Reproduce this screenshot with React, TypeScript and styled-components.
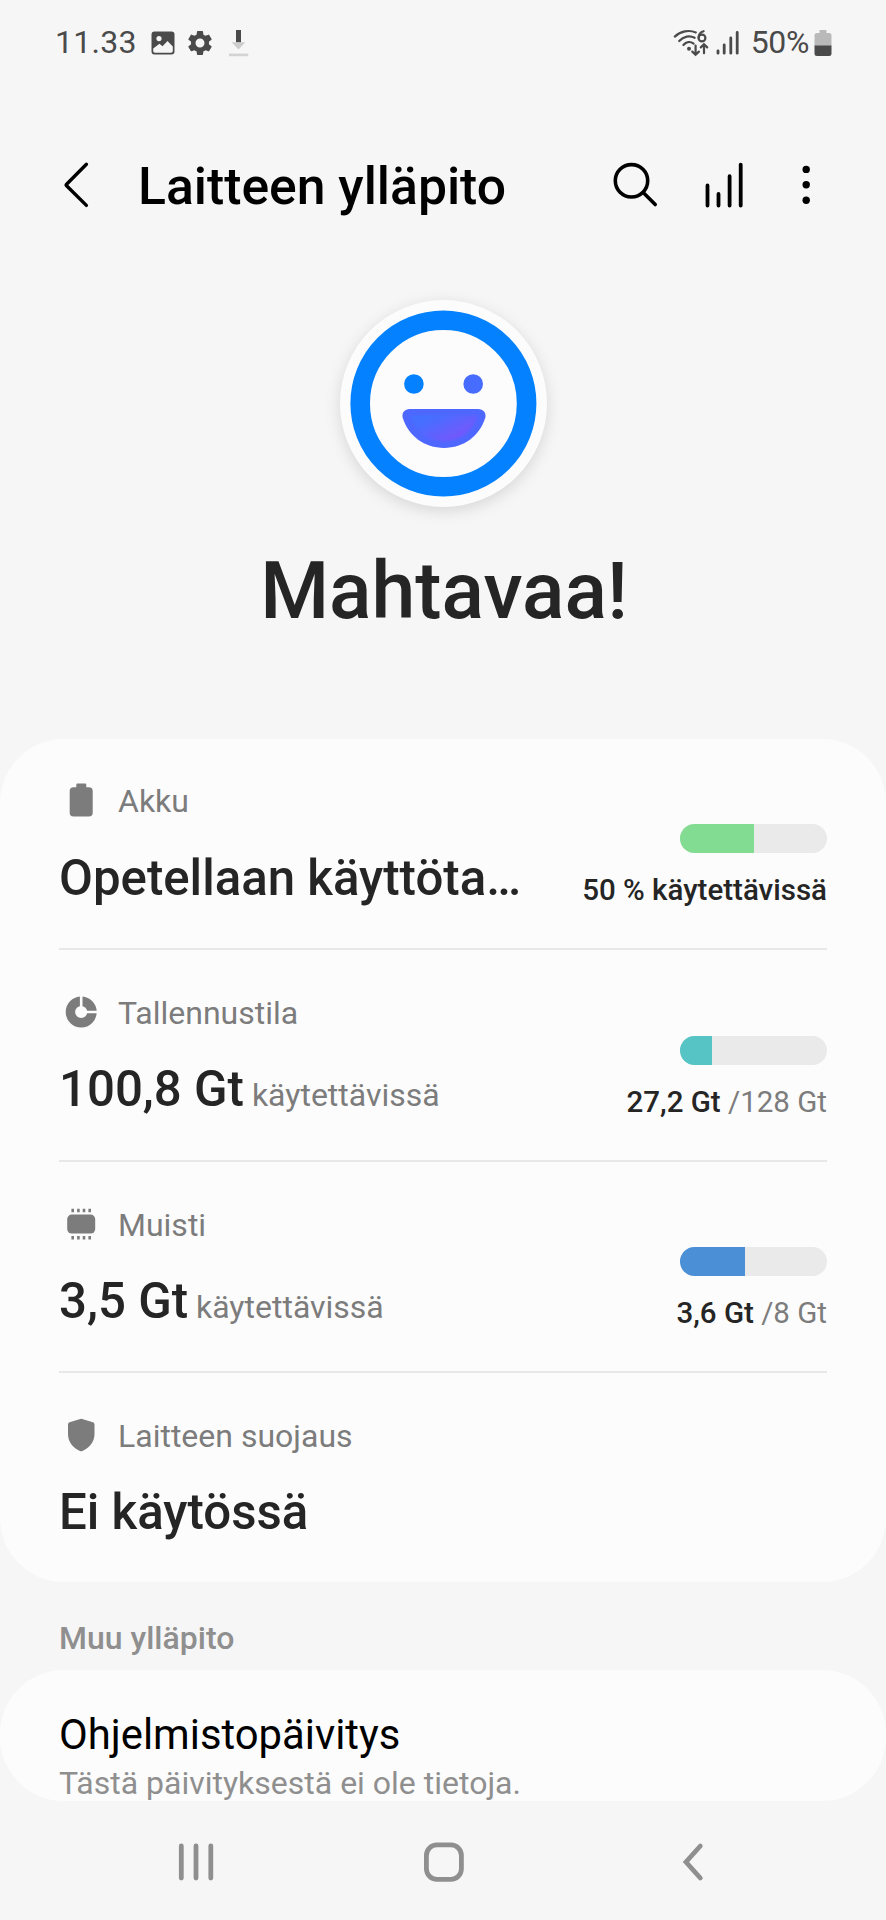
import React from 'react';
import styled, { createGlobalStyle } from 'styled-components';

const GlobalStyle = createGlobalStyle`
  * { box-sizing: border-box; }
  body {
    margin: 0;
    background: #f6f6f6;
    font-family: Roboto, 'Liberation Sans', sans-serif;
    color: #252525;
  }
  svg { display: block; flex: none; }
`;

const Screen = styled.div`
  width: 886px;
  height: 1920px;
  display: flex;
  flex-direction: column;
  overflow: hidden;
  background: #f6f6f6;
`;

const StatusBar = styled.header`
  height: 86px;
  padding: 0 54px 0 55px;
  display: flex;
  justify-content: space-between;
  color: #4a4a4a;
`;

const StatusGroup = styled.div`
  height: 86px;
  display: flex;
  align-items: center;
`;

const StatusText = styled.span<{ $gap: number }>`
  padding-bottom: 2px;
  font-size: 32px;
  line-height: 38px;
  margin-right: ${(p) => p.$gap}px;
  letter-spacing: ${(p) => (p.$gap > 10 ? '0.3px' : '-0.4px')};
`;

const StatusIcons = styled.div<{ $gap: number }>`
  display: flex;
  align-items: center;
  gap: ${(p) => p.$gap}px;
  margin-right: 12px;
`;

const Toolbar = styled.div`
  height: 197px;
  padding: 0 64px 0 60px;
  display: flex;
  align-items: center;
`;

const Title = styled.h1`
  flex: 1;
  margin: 5px 0 0 44px;
  font-size: 51.7px;
  line-height: 60px;
  font-weight: 500;
  color: #000;
`;

const Actions = styled.div`
  display: flex;
  align-items: center;
  gap: 40px;
`;

const Hero = styled.section`
  height: 455.7px;
  padding-top: 17px;
  display: flex;
  flex-direction: column;
  align-items: center;
`;

const FaceDisc = styled.div`
  width: 207px;
  height: 207px;
  border-radius: 50%;
  background: #fcfcfc;
  box-shadow: 0 4px 16px rgba(0, 0, 0, 0.13);
`;

const Verdict = styled.h2`
  margin: 38px 0 0;
  padding-left: 2px;
  font-size: 78.8px;
  line-height: 92px;
  font-weight: 500;
`;

const Card = styled.section`
  flex: none;
  padding: 0 59px;
  border-radius: 64px;
  background: #fcfcfc;
`;

const Row = styled.div`
  height: 211.6px;
  display: flex;
  justify-content: space-between;
  border-bottom: 2px solid #e8e8e8;
  &:last-child {
    height: 208.9px;
    border-bottom: 0;
  }
`;

const RowMain = styled.div`
  padding-top: 39.5px;
`;

const RowLabel = styled.div`
  height: 44.4px;
  display: flex;
  align-items: center;
  gap: 15px;
  color: #7c7c7c;
`;

const LabelText = styled.span`
  padding-top: 2px;
  font-size: 32px;
  line-height: 38px;
`;

const Value = styled.div`
  margin-top: 26px;
  font-size: 49.2px;
  line-height: 58px;
  font-weight: 500;
  white-space: pre;
`;

const ValueNote = styled.span`
  font-size: 32px;
  font-weight: 400;
  color: #7c7c7c;
`;

const RowSide = styled.div`
  padding-top: 85.4px;
  display: flex;
  flex-direction: column;
  align-items: flex-end;
`;

const Meter = styled.div`
  width: 147px;
  height: 29px;
  border-radius: 15px;
  overflow: hidden;
  background: #eaeaea;
`;

const MeterFill = styled.div<{ $color: string }>`
  height: 100%;
  background: ${(p) => p.$color};
`;

const MeterText = styled.div`
  margin-top: 19px;
  font-size: 29.5px;
  line-height: 36px;
  font-weight: 500;
  white-space: pre;
`;

const MeterTotal = styled.span`
  font-weight: 400;
  color: #7c7c7c;
`;

const SectionTitle = styled.h3`
  flex: none;
  height: 88px;
  margin: 0;
  padding: 37px 59px 0;
  font-size: 32px;
  line-height: 38px;
  font-weight: 500;
  color: #8f8f8f;
`;

const ListCard = styled(Card)`
  height: 131px;
  padding-top: 40px;
  overflow: hidden;
`;

const ItemTitle = styled.div`
  font-size: 41.8px;
  line-height: 50px;
  color: #000;
`;

const ItemSummary = styled.div`
  margin-top: 6px;
  font-size: 32px;
  line-height: 35px;
  color: #8f8f8f;
`;

const NavBar = styled.nav`
  flex: 1;
  padding: 3px 169px 0 171px;
  display: flex;
  justify-content: space-between;
  align-items: center;
`;

const ImageIcon = () => (
  <svg width="24" height="24" viewBox="0 0 24 24">
    <path
      fill="#4a4a4a"
      fillRule="evenodd"
      d="M3.5 .5h17a3 3 0 0 1 3 3v17a3 3 0 0 1-3 3h-17a3 3 0 0 1-3-3v-17a3 3 0 0 1 3-3zM2.2 17.5V20a1.8 1.8 0 0 0 1.8 1.8h16A1.8 1.8 0 0 0 21.8 20v-4.5L16.5 10l-5 5.3-3-2.6zM8 5a2.6 2.6 0 1 0 0 5.2A2.6 2.6 0 0 0 8 5z"
    />
  </svg>
);

const GearIcon = () => (
  <svg width="30" height="30" viewBox="0 0 24 24">
    <path
      fill="#4a4a4a"
      d="M19.14 12.94c.04-.3.06-.61.06-.94 0-.32-.02-.64-.07-.94l2.03-1.58a.49.49 0 0 0 .12-.61l-1.92-3.32a.488.488 0 0 0-.59-.22l-2.39.96c-.5-.38-1.03-.7-1.62-.94l-.36-2.54a.484.484 0 0 0-.48-.41h-3.84c-.24 0-.43.17-.47.41l-.36 2.54c-.59.24-1.13.57-1.62.94l-2.39-.96c-.22-.08-.47 0-.59.22L2.74 8.87c-.12.21-.08.47.12.61l2.03 1.58c-.05.3-.09.63-.09.94s.02.64.07.94l-2.03 1.58a.49.49 0 0 0-.12.61l1.92 3.32c.12.22.37.29.59.22l2.39-.96c.5.38 1.03.7 1.62.94l.36 2.54c.05.24.24.41.48.41h3.84c.24 0 .44-.17.47-.41l.36-2.54c.59-.24 1.13-.56 1.62-.94l2.39.96c.22.08.47 0 .59-.22l1.92-3.32c.12-.22.07-.47-.12-.61l-2.01-1.58zM12 15.6c-1.98 0-3.6-1.62-3.6-3.6s1.62-3.6 3.6-3.6 3.6 1.62 3.6 3.6-1.62 3.6-3.6 3.6z"
    />
  </svg>
);

const DownloadIcon = () => (
  <svg width="24" height="28" viewBox="-3.7 0 24 28">
    <path fill="#4a4a4a" d="M7.3 1h5v12.5h-5z" />
    <path fill="#cdcdcd" d="M3 13.2h13.6L9.8 20.4z" />
    <path fill="#d3d3d3" d="M.3 24.6h19.2v2.6H.3z" />
  </svg>
);

const WifiIcon = () => (
  <svg width="36" height="28" viewBox="0 0 36 28">
    <g fill="none" stroke="#4a4a4a" strokeWidth="2.2" strokeLinecap="round">
      <path d="M1.8 7.6C7.5 2 16 .6 22.8 3.4" />
      <path d="M6.2 12C10.5 7.2 16.8 6.2 21.6 8.8" />
      <path d="M10.4 16c2.8-3.3 7-3.8 10.2-1.4" />
      <path d="M22.6 16.5v9M19.3 22.6l3.3 3.2 3.3-3.2M31 24.2v-8.6M27.8 18.4l3.2-3.2 3.2 3.2" />
      <path d="M30.6 2.2c-3.2.8-5 3.4-5 6.6" />
      <circle cx="29" cy="9" r="3.4" />
    </g>
    <circle cx="16" cy="19.7" r="2" fill="#4a4a4a" />
  </svg>
);

const SignalIcon = () => (
  <svg width="23" height="26" viewBox="0 0 23 26">
    <path
      d="M2 20.8v2.4M8.2 14.8v8.4M14.8 8v15.2M21.2 2.4v20.8"
      stroke="#4a4a4a"
      strokeWidth="2.8"
      strokeLinecap="round"
    />
  </svg>
);

const BatteryStatusIcon = () => (
  <svg width="18" height="27" viewBox="0 0 18 27">
    <path fill="#b9b9b9" d="M5.5 0h7v3H15a2.5 2.5 0 0 1 2.5 2.5V16H.5V5.5A2.5 2.5 0 0 1 3 3h2.5z" />
    <path fill="#4a4a4a" d="M.5 15.5h17v8A2.5 2.5 0 0 1 15 26H3a2.5 2.5 0 0 1-2.5-2.5z" />
  </svg>
);

const BackIcon = () => (
  <svg width="34" height="50" viewBox="0 0 34 50">
    <path
      d="M26.4 4.2 6.6 24.2q-.8.8 0 1.6l19.8 19.6"
      fill="none"
      stroke="#000"
      strokeWidth="3.4"
      strokeLinecap="round"
      strokeLinejoin="round"
    />
  </svg>
);

const SearchIcon = () => (
  <svg width="50" height="50" viewBox="0 0 50 50">
    <g fill="none" stroke="#000" strokeWidth="3.6" strokeLinecap="round">
      <circle cx="21.5" cy="20.8" r="16.2" />
      <path d="m33.2 32.6 12 12" />
    </g>
  </svg>
);

const UsageIcon = () => (
  <svg width="50" height="50" viewBox="0 0 50 50">
    <path
      d="M7.5 25.5v20M18.5 34v11.5M29.6 16.2v29.3M40.7 4.6v40.9"
      stroke="#000"
      strokeWidth="3.8"
      strokeLinecap="round"
    />
  </svg>
);

const MoreIcon = () => (
  <svg width="32" height="50" viewBox="0 0 32 50">
    <circle cx="16.2" cy="9.4" r="3.7" />
    <circle cx="16.2" cy="24.8" r="3.7" />
    <circle cx="16.2" cy="40.2" r="3.7" />
  </svg>
);

const SmileFace = () => (
  <svg width="207" height="207" viewBox="0 0 207 207">
    <defs>
      <linearGradient id="mouth" x1="0" y1="0" x2="1" y2="1" gradientTransform="rotate(-8)">
        <stop offset="0.2" stopColor="#446fff" />
        <stop offset="0.95" stopColor="#8350fb" />
      </linearGradient>
      <filter id="soft" x="-20%" y="-20%" width="140%" height="140%">
        <feGaussianBlur stdDeviation="1.6" />
      </filter>
    </defs>
    <circle cx="103.4" cy="103.5" r="83.2" fill="none" stroke="#0381fe" strokeWidth="19.6" />
    <circle cx="73.9" cy="84" r="9.8" fill="#0381fe" />
    <circle cx="133.2" cy="84" r="9.8" fill="#466dff" />
    <path
      fill="#4d67ff"
      d="M69.7 109h68.5c5 0 8 3.6 7.2 8.3-5.7 19-21.8 30.6-41.4 30.6S68.3 136.3 62.6 117.3C61.7 112.6 64.7 109 69.7 109z"
    />
    <path
      fill="url(#mouth)"
      filter="url(#soft)"
      d="M70 115h68c-4.5 15-17 26-34 26S75 132 70 115z"
    />
  </svg>
);

const BatteryIcon = () => (
  <svg width="44" height="44" viewBox="0 0 44 44">
    <path
      fill="#7c7c7c"
      d="M18.5 5.5h7.6q1.2 0 1.2 1.2V9.2h2.6a3.8 3.8 0 0 1 3.8 3.8v21.7a3.8 3.8 0 0 1-3.8 3.8H14.5a3.8 3.8 0 0 1-3.8-3.8V13a3.8 3.8 0 0 1 3.8-3.8h2.8V6.7q0-1.2 1.2-1.2z"
    />
  </svg>
);

const StorageIcon = () => (
  <svg width="44" height="44" viewBox="0 0 44 44">
    <circle cx="22.2" cy="22" r="10.8" fill="none" stroke="#7c7c7c" strokeWidth="9.4" />
    <path d="M22.2 5v13M26 22h14" stroke="#fcfcfc" strokeWidth="2.6" />
  </svg>
);

const MemoryIcon = () => (
  <svg width="44" height="44" viewBox="0 0 44 44">
    <rect x="8.2" y="12.6" width="28" height="19" rx="4.5" fill="#7c7c7c" />
    <path
      d="M13.7 6.8v3.4M19.4 6.8v3.4M25 6.8v3.4M30.7 6.8v3.4M13.7 34v3.4M19.4 34v3.4M25 34v3.4M30.7 34v3.4"
      stroke="#7c7c7c"
      strokeWidth="2.6"
    />
  </svg>
);

const ShieldIcon = () => (
  <svg width="44" height="44" viewBox="0 0 44 44">
    <path
      fill="#7c7c7c"
      d="M21.3 5.9q.9-.4 1.8 0l10.8 3.4q1.6.5 1.6 2.2V21c0 8-5.5 14.2-12.1 17q-1.2.5-2.4 0C14.4 35.2 9 29 9 21v-9.5q0-1.7 1.6-2.2z"
    />
  </svg>
);

const RecentsIcon = () => (
  <svg width="50" height="50" viewBox="0 0 50 50">
    <path d="M10.3 9v32M25 9v32M39.8 9v32" stroke="#8f8f8f" strokeWidth="4.8" strokeLinecap="round" />
  </svg>
);

const HomeIcon = () => (
  <svg width="50" height="50" viewBox="0 0 50 50">
    <rect x="7.4" y="7.9" width="35" height="34.4" rx="10.5" fill="none" stroke="#8f8f8f" strokeWidth="4.8" />
  </svg>
);

const NavBackIcon = () => (
  <svg width="50" height="50" viewBox="0 0 50 50">
    <path
      d="M33.3 9 19 25l14.3 16"
      fill="none"
      stroke="#8f8f8f"
      strokeWidth="4.8"
      strokeLinecap="round"
    />
  </svg>
);

interface Item {
  icon: React.ReactNode;
  label: string;
  value: string;
  note?: string;
  meter?: { percent: number; color: string; text: string; total?: string };
}

const items: Item[] = [
  {
    icon: <BatteryIcon />,
    label: 'Akku',
    value: 'Opetellaan käyttöta…',
    meter: { percent: 50, color: '#82dd92', text: '50 % käytettävissä' },
  },
  {
    icon: <StorageIcon />,
    label: 'Tallennustila',
    value: '100,8 Gt',
    note: 'käytettävissä',
    meter: { percent: 22, color: '#56c3c5', text: '27,2 Gt', total: '/128 Gt' },
  },
  {
    icon: <MemoryIcon />,
    label: 'Muisti',
    value: '3,5 Gt',
    note: 'käytettävissä',
    meter: { percent: 44, color: '#4b8fd6', text: '3,6 Gt', total: '/8 Gt' },
  },
  { icon: <ShieldIcon />, label: 'Laitteen suojaus', value: 'Ei käytössä' },
];

export default function App() {
  return (
    <>
      <GlobalStyle />
      <Screen>
        <StatusBar>
          <StatusGroup>
            <StatusText $gap={14}>11.33</StatusText>
            <StatusIcons $gap={10}>
              <ImageIcon />
              <GearIcon />
              <DownloadIcon />
            </StatusIcons>
          </StatusGroup>
          <StatusGroup>
            <StatusIcons $gap={7}>
              <WifiIcon />
              <SignalIcon />
            </StatusIcons>
            <StatusText $gap={5}>50%</StatusText>
            <BatteryStatusIcon />
          </StatusGroup>
        </StatusBar>

        <Toolbar>
          <BackIcon />
          <Title>Laitteen ylläpito</Title>
          <Actions>
            <SearchIcon />
            <UsageIcon />
            <MoreIcon />
          </Actions>
        </Toolbar>

        <Hero>
          <FaceDisc>
            <SmileFace />
          </FaceDisc>
          <Verdict>Mahtavaa!</Verdict>
        </Hero>

        <Card>
          {items.map((item) => (
            <Row key={item.label}>
              <RowMain>
                <RowLabel>
                  {item.icon}
                  <LabelText>{item.label}</LabelText>
                </RowLabel>
                <Value>
                  {item.value}
                  {item.note && <ValueNote> {item.note}</ValueNote>}
                </Value>
              </RowMain>
              {item.meter && (
                <RowSide>
                  <Meter>
                    <MeterFill $color={item.meter.color} style={{ width: `${item.meter.percent}%` }} />
                  </Meter>
                  <MeterText>
                    {item.meter.text}
                    {item.meter.total && <MeterTotal> {item.meter.total}</MeterTotal>}
                  </MeterText>
                </RowSide>
              )}
            </Row>
          ))}
        </Card>

        <SectionTitle>Muu ylläpito</SectionTitle>
        <ListCard>
          <ItemTitle>Ohjelmistopäivitys</ItemTitle>
          <ItemSummary>Tästä päivityksestä ei ole tietoja.</ItemSummary>
        </ListCard>

        <NavBar>
          <RecentsIcon />
          <HomeIcon />
          <NavBackIcon />
        </NavBar>
      </Screen>
    </>
  );
}
